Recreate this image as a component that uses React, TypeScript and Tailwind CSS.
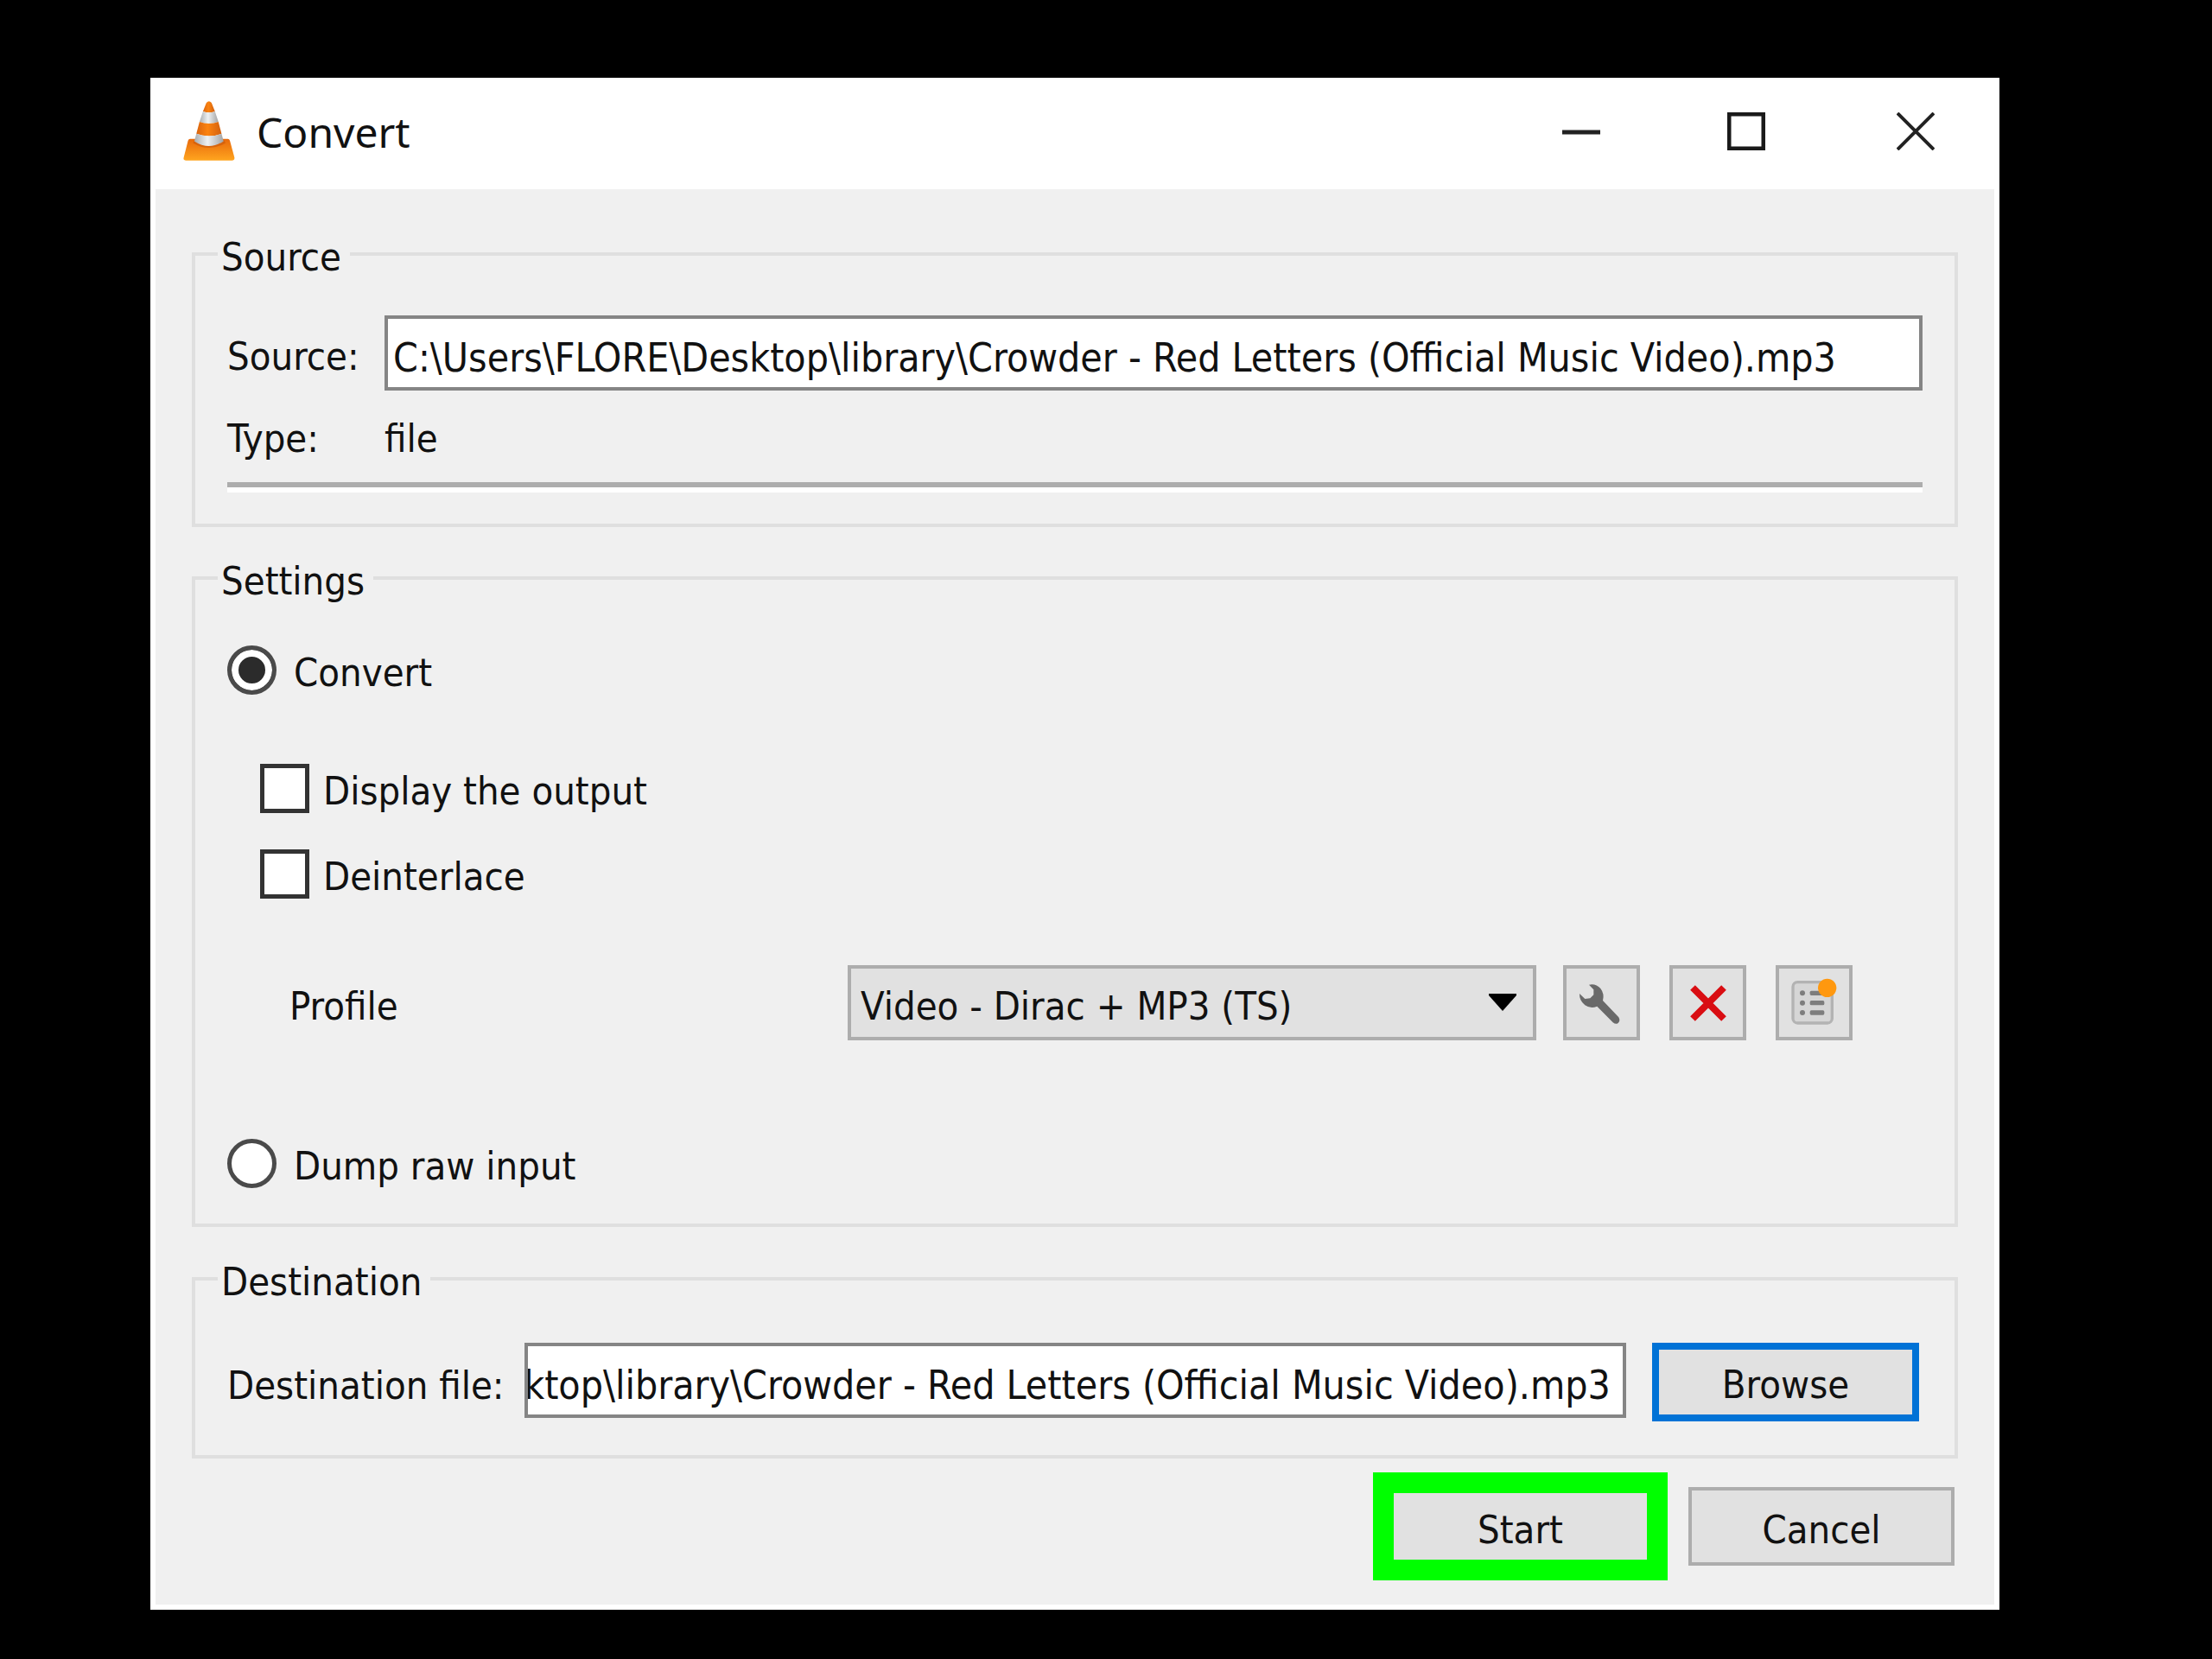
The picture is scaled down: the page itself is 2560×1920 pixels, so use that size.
import { useEffect, useRef } from "react"
import type { ReactNode } from "react"

const FILE_PATH = "C:\\Users\\FLORE\\Desktop\\library\\Crowder - Red Letters (Official Music Video).mp3"

const fieldClass =
  "h-[87px] min-w-0 flex-1 border-4 border-[#858585] bg-white pt-2.5 text-[46px] leading-[60px] outline-none"

const buttonClass = "flex shrink-0 items-center justify-center bg-[#e1e1e1]"

function ConeIcon() {
  return (
    <svg viewBox="150 100 190 220" className="h-[73px] w-[63px] shrink-0" aria-hidden="true">
      <defs>
        <linearGradient id="cone-base" x1="0" y1="0" x2="0" y2="1">
          <stop offset="0" stopColor="#e8690b" />
          <stop offset="1" stopColor="#ffa51f" />
        </linearGradient>
        <linearGradient id="cone-orange" x1="0" y1="0" x2="1" y2="0">
          <stop offset="0" stopColor="#d9640f" />
          <stop offset="0.45" stopColor="#fb8310" />
          <stop offset="1" stopColor="#d2600f" />
        </linearGradient>
        <linearGradient id="cone-white" x1="0" y1="0" x2="1" y2="0">
          <stop offset="0" stopColor="#a9adb0" />
          <stop offset="0.45" stopColor="#eef1f3" />
          <stop offset="1" stopColor="#a3a3a3" />
        </linearGradient>
      </defs>
      <path d="M180 238H312Q317 238 319 244L335 303Q336 313 326 313H166Q155 313 158 303L173 244Q175 238 180 238Z" fill="url(#cone-base)" />
      <path d="M190 252Q246 286 304 252L297 240H197Z" fill="#c9560a" opacity="0.6" />
      <path d="M237 112Q246 101 255 112L267 142Q246 150 225 142Z" fill="url(#cone-orange)" />
      <path d="M225 142Q246 150 267 142L279 178Q246 190 213 178Z" fill="url(#cone-white)" />
      <path d="M213 178Q246 190 279 178L290 220Q246 236 202 220Z" fill="url(#cone-orange)" />
      <path d="M202 220Q246 236 290 220L297 246Q246 280 195 246Z" fill="url(#cone-white)" />
    </svg>
  )
}

function WrenchIcon() {
  return (
    <svg viewBox="140 130 150 150" className="size-[50px]" aria-hidden="true">
      <path
        d="M176 141Q200 136 216 154Q230 172 224 196L279 254Q286 266 277 274Q269 280 259 272L204 216Q182 226 162 212Q142 196 143 172L162 190L180 188L192 176L192 158Z"
        fill="#696969"
      />
    </svg>
  )
}

function DeleteIcon() {
  return (
    <svg viewBox="0 0 44 44" className="size-[44px]" aria-hidden="true">
      <path d="M4 4L40 40M40 4L4 40" stroke="#d90d12" strokeWidth="8" />
    </svg>
  )
}

function NewProfileIcon() {
  return (
    <svg viewBox="875 120 165 168" className="h-[56px] w-[55px]" aria-hidden="true">
      <rect x="884" y="137" width="136" height="142" rx="16" fill="#d6d6d6" stroke="#b3b3b3" strokeWidth="10" />
      {[175, 209, 243].map((y) => (
        <g key={y} fill="#7d7d7d">
          <circle cx="917" cy={y} r="9" />
          <rect x="943" y={y - 8} width="50" height="16" rx="5" />
        </g>
      ))}
      <circle cx="1003" cy="157" r="32" fill="#ff980f" />
    </svg>
  )
}

function TitleBar() {
  return (
    <header className="flex h-[123px] items-center pb-3 pl-[30px]">
      <ConeIcon />
      <h1 className="ml-6 flex-1 pt-0.5 font-['Noto_Sans',sans-serif] text-[48px] leading-[60px]">Convert</h1>
      <button type="button" aria-label="Minimize" className="flex h-full w-[172px] items-center justify-center">
        <svg viewBox="0 0 44 44" className="size-[44px]" aria-hidden="true">
          <path d="M0 23H44" stroke="#222" strokeWidth="5" />
        </svg>
      </button>
      <button type="button" aria-label="Maximize" className="flex h-full w-[210px] items-center justify-center">
        <svg viewBox="0 0 44 44" className="size-[44px]" aria-hidden="true">
          <path d="M2 2H42V42H2Z" fill="none" stroke="#1a1a1a" strokeWidth="5" />
        </svg>
      </button>
      <button type="button" aria-label="Close" className="flex h-full w-[182px] items-center justify-center">
        <svg viewBox="0 0 44 44" className="size-[44px]" aria-hidden="true">
          <path d="M1 1L43 43M43 1L1 43" stroke="#222" strokeWidth="4" />
        </svg>
      </button>
    </header>
  )
}

function Group({ title, className, children }: { title: string; className: string; children: ReactNode }) {
  return (
    <fieldset className={`min-w-0 border-4 border-[#dfdfdf] px-[37px] ${className}`}>
      <legend className="-ml-[11px] px-1 pt-2 pr-2.5 leading-[44px]">{title}</legend>
      {children}
    </fieldset>
  )
}

function Radio({ label, defaultChecked }: { label: string; defaultChecked?: boolean }) {
  return (
    <label className="flex w-fit items-center gap-5">
      <input
        type="radio"
        name="mode"
        defaultChecked={defaultChecked}
        className="size-[57px] appearance-none rounded-full border-[5px] border-[#4a4a4a] bg-white checked:bg-[#2b2b2b] checked:shadow-[inset_0_0_0_8px_#fff]"
      />
      <span className="pt-2 leading-[60px]">{label}</span>
    </label>
  )
}

function Checkbox({ label }: { label: string }) {
  return (
    <label className="flex w-fit items-center gap-4">
      <input type="checkbox" className="size-[57px] appearance-none border-[5px] border-[#333] bg-white checked:bg-[#333]" />
      <span className="pt-2 leading-[60px]">{label}</span>
    </label>
  )
}

export default function App() {
  const destination = useRef<HTMLInputElement>(null)

  // keep the file name in view, the folder part scrolls off to the left
  useEffect(() => {
    if (destination.current) destination.current.scrollLeft = destination.current.scrollWidth
  }, [])

  return (
    <div className="min-h-screen bg-black pt-[90px] pr-[246px] pb-14 pl-[174px] font-['DejaVu_Sans_Condensed','DejaVu_Sans',sans-serif] text-[45px] text-[#111]">
      <main className="bg-white p-[6px]">
        <TitleBar />
        <form className="bg-[#f0f0f0] px-[42px] pt-[49px] pb-7" onSubmit={(e) => e.preventDefault()}>
          <Group title="Source" className="pb-9">
            <div className="flex items-center pt-[45px]">
              <label htmlFor="source" className="w-[182px] pt-2 leading-[60px]">
                Source:
              </label>
              <input id="source" readOnly defaultValue={FILE_PATH} className={`${fieldClass} px-1.5`} />
            </div>
            <div className="flex pt-[26px] leading-[60px]">
              <span className="w-[182px]">Type:</span>
              <span>file</span>
            </div>
            <hr className="mt-5 h-3 border-t-[6px] border-b-[6px] border-t-[#adadad] border-b-white" />
          </Group>

          <Group title="Settings" className="mt-[33px] pb-9">
            <div className="pt-[46px]">
              <Radio label="Convert" defaultChecked />
            </div>
            <div className="flex flex-col gap-[31px] pt-[69px] pl-[38px]">
              <Checkbox label="Display the output" />
              <Checkbox label="Deinterlace" />
            </div>
            <div className="flex items-center pt-[72px] pr-[81px] pl-[72px]">
              <label htmlFor="profile" className="w-[646px] pt-2 leading-[60px]">
                Profile
              </label>
              <div className="relative mr-[31px] flex-1">
                <select
                  id="profile"
                  className="block h-[87px] w-full appearance-none border-4 border-[#adadad] bg-[#e1e1e1] pt-2 pl-[11px] leading-[60px] outline-none"
                >
                  <option>Video - Dirac + MP3 (TS)</option>
                </select>
                <svg viewBox="0 0 32 20" className="pointer-events-none absolute top-[33px] right-[23px] h-5 w-8" aria-hidden="true">
                  <path d="M0 0H32V2L16 20L0 2Z" fill="#000" />
                </svg>
              </div>
              <div className="flex gap-[34px]">
                <button type="button" aria-label="Edit selected profile" className={`${buttonClass} h-[87px] w-[89px] border-4 border-[#adadad] pr-1`}>
                  <WrenchIcon />
                </button>
                <button type="button" aria-label="Delete selected profile" className={`${buttonClass} h-[87px] w-[89px] border-4 border-[#adadad]`}>
                  <DeleteIcon />
                </button>
                <button type="button" aria-label="Create a new profile" className={`${buttonClass} h-[87px] w-[89px] border-4 border-[#adadad] pb-1`}>
                  <NewProfileIcon />
                </button>
              </div>
            </div>
            <div className="pt-[108px]">
              <Radio label="Dump raw input" />
            </div>
          </Group>

          <Group title="Destination" className="mt-[34px] pb-[39px]">
            <div className="flex items-start pt-12 pr-1">
              <label htmlFor="destination" className="w-[344px] pt-5 leading-[60px]">
                Destination file:
              </label>
              <input
                id="destination"
                ref={destination}
                readOnly
                defaultValue={FILE_PATH}
                className={`${fieldClass} pr-3.5 pl-0`}
              />
              <button type="button" className={`${buttonClass} ml-[30px] h-[91px] w-[309px] border-8 border-[#0072d6]`}>
                <span className="pt-1.5">Browse</span>
              </button>
            </div>
          </Group>

          <div className="flex items-center justify-end gap-6 pt-4 pr-1">
            <button type="submit" className={`${buttonClass} h-[125px] w-[341px] border-[24px] border-[#00ff00]`}>
              <span className="pt-2">Start</span>
            </button>
            <button type="button" className={`${buttonClass} h-[91px] w-[308px] border-4 border-[#adadad]`}>
              <span className="pt-2">Cancel</span>
            </button>
          </div>
        </form>
      </main>
    </div>
  )
}
